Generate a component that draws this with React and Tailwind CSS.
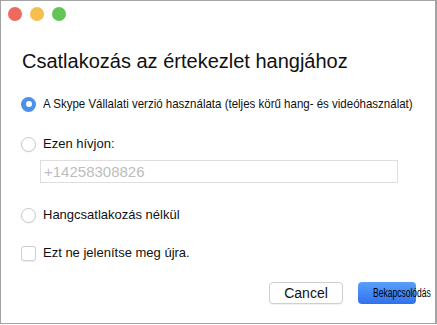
import React from "react";

function Radio({ checked }) {
  if (checked) {
    return (
      <span className="flex h-[15px] w-[15px] shrink-0 items-center justify-center rounded-full bg-[#4a90ee]">
        <span className="h-[6px] w-[6px] rounded-full bg-white" />
      </span>
    );
  }
  return (
    <span className="h-[15px] w-[15px] shrink-0 rounded-full border border-[#c9c9c9] bg-white shadow-[0_0.5px_1px_rgba(0,0,0,0.08)]" />
  );
}

export default function App() {
  const font = { fontFamily: '"Liberation Sans", Arial, sans-serif' };
  return (
    <div
      className="relative flex h-[324px] w-[437px] flex-col overflow-hidden border-t border-l border-b border-r-2 border-[#a3a3a3] bg-white text-[#111]"
      style={font}
    >
      {/* title bar */}
      <div className="flex h-[24px] items-center gap-[8px] pl-[7px] pt-[1px]">
        <span className="h-[14px] w-[14px] rounded-full bg-[#ee6a5f]" />
        <span className="h-[14px] w-[14px] rounded-full bg-[#f5bf4f]" />
        <span className="h-[14px] w-[14px] rounded-full bg-[#62c555]" />
      </div>

      <div className="flex flex-col pl-[20px]">
        <h1 className="mt-[24px] pl-[1px] text-[20px] leading-[24px] text-[#111]">
          Csatlakozás az értekezlet hangjához
        </h1>

        <div className="mt-[23px] flex h-[16px] items-center gap-[7px]">
          <Radio checked />
          <span className="inline-block origin-left scale-x-[0.885] whitespace-nowrap text-[13px] leading-[16px]">
            A Skype Vállalati verzió használata (teljes körű hang- és videóhasználat)
          </span>
        </div>

        <div className="mt-[24px] flex h-[16px] items-center gap-[7px]">
          <Radio />
          <span className="text-[13px] leading-[16px]">Ezen hívjon:</span>
        </div>

        <div className="ml-[19px] mt-[8px] flex h-[23px] w-[358px] items-center border border-[#dedede] pl-[3px]">
          <span className="text-[15px] leading-[20px] text-[#bdbdbd]">+14258308826</span>
        </div>

        <div className="mt-[24px] flex h-[16px] items-center gap-[7px]">
          <Radio />
          <span className="text-[13px] leading-[16px]">Hangcsatlakozás nélkül</span>
        </div>

        <div className="mt-[22px] flex h-[16px] items-center gap-[7px]">
          <span className="h-[15px] w-[15px] shrink-0 rounded-[3px] border border-[#cfcfcf] bg-white shadow-[0_0.5px_1px_rgba(0,0,0,0.08)]" />
          <span className="text-[13px] leading-[16px]">Ezt ne jelenítse meg újra.</span>
        </div>
      </div>

      <div className="mt-[21px] flex items-center pl-[268px]">
        <button className="flex h-[22px] w-[74px] items-center justify-center rounded-[4px] border border-[#cfcfcf] bg-white text-[14px] leading-none text-[#111] shadow-[0_1px_1px_rgba(0,0,0,0.06)]">
          Cancel
        </button>
        <button className="ml-[15px] flex h-[22px] w-[58px] items-center overflow-visible rounded-[4px] bg-gradient-to-b from-[#5a9ff9] to-[#2f71ee] pl-[15px]">
          <span className="relative inline-block origin-left scale-x-[0.71] whitespace-nowrap text-[12px] leading-none text-black">
            Bekapcsolódás
          </span>
        </button>
      </div>
    </div>
  );
}
